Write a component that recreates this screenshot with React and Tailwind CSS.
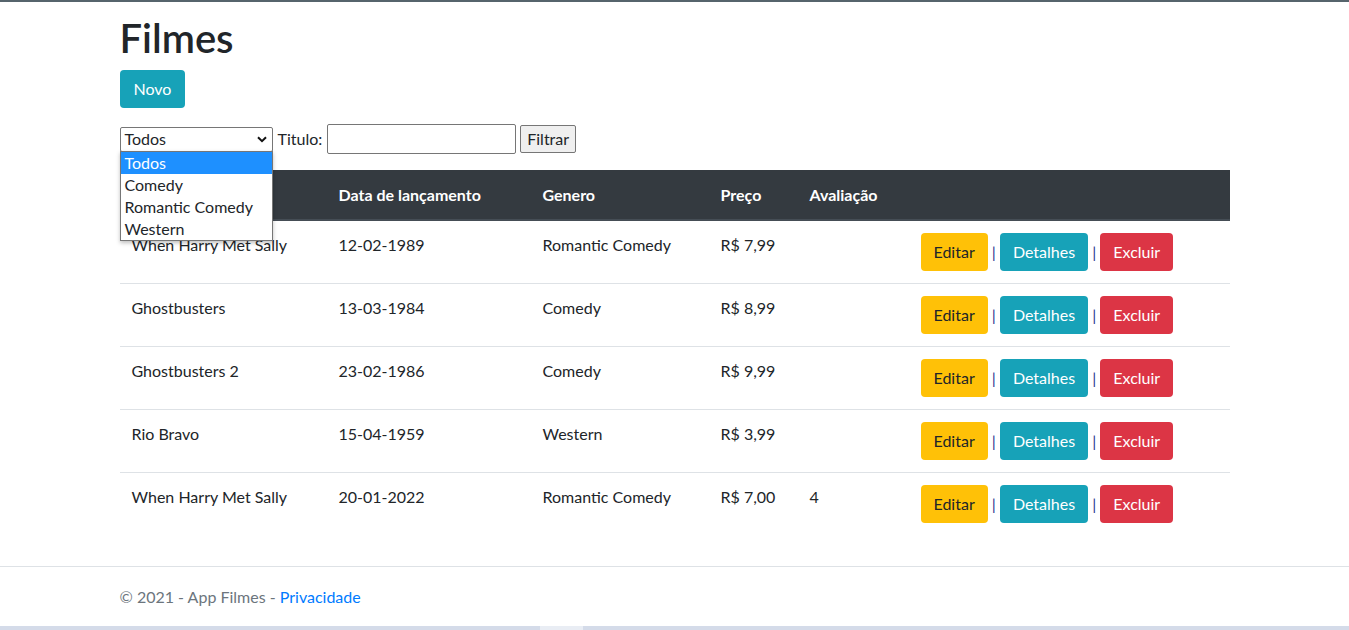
import React, { useState } from 'react';

const filmes = [
  { titulo: 'When Harry Met Sally', data: '12-02-1989', genero: 'Romantic Comedy', preco: 'R$ 7,99', avaliacao: '' },
  { titulo: 'Ghostbusters', data: '13-03-1984', genero: 'Comedy', preco: 'R$ 8,99', avaliacao: '' },
  { titulo: 'Ghostbusters 2', data: '23-02-1986', genero: 'Comedy', preco: 'R$ 9,99', avaliacao: '' },
  { titulo: 'Rio Bravo', data: '15-04-1959', genero: 'Western', preco: 'R$ 3,99', avaliacao: '' },
  { titulo: 'When Harry Met Sally', data: '20-01-2022', genero: 'Romantic Comedy', preco: 'R$ 7,00', avaliacao: '4' },
];

const generos = ['Todos', 'Comedy', 'Romantic Comedy', 'Western'];

function App() {
  const [genero] = useState('Todos');

  return (
    <div className="min-h-[630px] bg-white border-t-2 border-[#56646c] font-['Lato','Noto_Sans',sans-serif] text-[16px] leading-6 text-[#212529]">
      <main className="w-[1110px] mx-auto pt-[12px] pb-[15px]">
        <h1 className="text-[40px] leading-[48px] font-semibold mb-2">Filmes</h1>
        <p className="mb-4">
          <button className="h-[38px] px-[14px] rounded bg-[#17a2b8] text-white">Novo</button>
        </p>

        {/* Filtro */}
        <form className="flex items-center h-[30px] mb-4">
          <div className="relative">
            <div className="w-[153px] h-[25px] border border-[#767676] rounded-[2px] flex items-center justify-between pl-[4px] pr-[5px] bg-white">
              <span>{genero}</span>
              <svg width="10" height="7" viewBox="0 0 10 7" fill="none">
                <path d="M1 1.2l4 4 4-4" stroke="#111" strokeWidth="2" />
              </svg>
            </div>
            <ul className="absolute left-0 top-[24px] w-[153px] border border-[#767676] bg-white shadow-[0_2px_4px_rgba(0,0,0,0.25)] z-10">
              {generos.map(g => (
                <li
                  key={g}
                  className={`h-[22px] leading-[22px] pl-[4px] ${g === genero ? 'bg-[#1e90ff] text-white' : ''}`}
                >
                  {g}
                </li>
              ))}
            </ul>
          </div>
          <label className="ml-[5px]">Titulo:</label>
          <input type="text" className="ml-[5px] w-[189px] h-[30px] border border-[#767676] rounded-[2px]" />
          <button type="button" className="ml-[4px] h-[28px] px-[6px] bg-[#efefef] border border-[#767676] rounded-[2px]">
            Filtrar
          </button>
        </form>

        {/* Tabela */}
        <table className="w-full mb-4">
          <thead>
            <tr className="bg-[#343a40] text-white">
              <th className="w-[207px] text-left font-bold px-3 pt-[13px] pb-3 border-b-2 border-[#454d55]">Titulo</th>
              <th className="w-[204px] text-left font-bold px-3 pt-[13px] pb-3 border-b-2 border-[#454d55]">Data de lançamento</th>
              <th className="w-[178px] text-left font-bold px-3 pt-[13px] pb-3 border-b-2 border-[#454d55]">Genero</th>
              <th className="w-[89px] text-left font-bold px-3 pt-[13px] pb-3 border-b-2 border-[#454d55]">Preço</th>
              <th className="w-[111px] text-left font-bold px-3 pt-[13px] pb-3 border-b-2 border-[#454d55]">Avaliação</th>
              <th className="w-[321px] px-3 pt-[13px] pb-3 border-b-2 border-[#454d55]"></th>
            </tr>
          </thead>
          <tbody>
            {filmes.map((f, i) => (
              <tr key={i} className="border-t border-[#dee2e6] first:border-t-0">
                <td className="p-3 align-top">{f.titulo}</td>
                <td className="p-3 align-top">{f.data}</td>
                <td className="p-3 align-top">{f.genero}</td>
                <td className="p-3 align-top">{f.preco}</td>
                <td className="p-3 align-top">{f.avaliacao}</td>
                <td className="p-3 align-top whitespace-nowrap">
                  <button className="h-[38px] px-[13px] rounded bg-[#ffc107] text-[#212529]">Editar</button>
                  <span className="text-[#2a3590]"> | </span>
                  <button className="h-[38px] px-[13px] rounded bg-[#17a2b8] text-white">Detalhes</button>
                  <span className="text-[#2a3590]"> | </span>
                  <button className="h-[38px] px-[13px] rounded bg-[#dc3545] text-white">Excluir</button>
                </td>
              </tr>
            ))}
          </tbody>
        </table>
      </main>

      <footer className="border-t border-[#dee2e6] h-[60px]">
        <div className="w-[1110px] mx-auto h-[59px] flex items-center text-[#6c757d]">
          © 2021 - App Filmes -&nbsp;<a href="#" className="text-[#007bff]">Privacidade</a>
        </div>
      </footer>
      <div className="flex h-[4px] bg-[#d4dbe9]">
        <div className="w-[540px]"></div>
        <div className="w-[43px] bg-[#e9edf4]"></div>
      </div>
    </div>
  );
}

export default App;
